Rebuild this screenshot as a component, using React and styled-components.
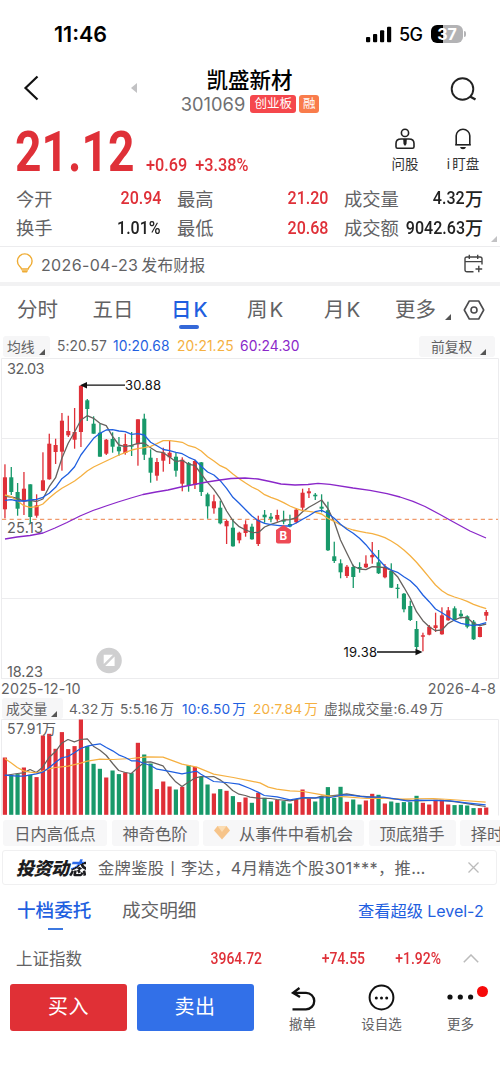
import React from 'react';
import styled, { createGlobalStyle } from 'styled-components';

const RED = '#df3038';
const GREEN = '#18996a';
const BLUE = '#1f5fe0';
const ORANGE = '#f5b041';
const PURPLE = '#8a27c9';
const GRAY = '#626264';

const STEP = 6.333;
const FIRST_X = 4.9;
const xAt = (i) => FIRST_X + i * STEP;

// [up, high, low, bodyTop, bodyBottom, volume]
const candles = [
  [1, 464.3, 518.3, 477.3, 509.3, 57.3],
  [0, 467, 495, 477.3, 492, 40],
  [0, 483, 515.7, 492, 508.7, 40.7],
  [1, 472, 515, 488.7, 501, 47.3],
  [0, 484.3, 523.3, 484.3, 517, 40],
  [1, 494.3, 517.7, 505.3, 515.7, 37.7],
  [1, 452.3, 491, 480.3, 490.7, 79.3],
  [1, 433.7, 479.7, 443.7, 479.3, 81],
  [1, 438.7, 464, 445, 452, 66],
  [1, 413, 470.7, 420.7, 451.7, 82.7],
  [1, 415.7, 437, 431, 435.3, 65.7],
  [1, 408, 448.7, 432, 439.7, 68.7],
  [1, 385.7, 447, 385.7, 432, 95.3],
  [0, 399, 421, 400.3, 409, 68.7],
  [0, 416.3, 433.7, 423.7, 433.7, 51],
  [0, 423.7, 456.7, 432.7, 456.7, 46],
  [1, 439, 455, 439.7, 453.7, 37.3],
  [0, 432.3, 452.7, 439, 446.7, 44.3],
  [0, 437, 455.7, 446.7, 451.3, 40.7],
  [1, 433.7, 454.7, 444, 453, 42.3],
  [0, 432, 456, 445.3, 446.7, 41.7],
  [1, 419.3, 465.7, 419.3, 444.3, 72],
  [0, 413.7, 460, 418.7, 454.7, 60.3],
  [0, 449.3, 482.7, 457.7, 472.7, 51.3],
  [1, 458, 480.7, 462, 475.7, 25.7],
  [1, 447.7, 471.7, 452.3, 460.7, 33.3],
  [1, 440, 464, 452.7, 457.3, 28.3],
  [0, 453, 476.7, 456.7, 470.7, 25.3],
  [1, 457.3, 491.3, 459.7, 483.7, 28],
  [0, 462, 491.7, 463, 485.3, 49.7],
  [1, 459.7, 489, 461, 485, 48],
  [0, 462, 496, 462.3, 492, 38],
  [0, 492.7, 518.7, 494.3, 506.3, 30.3],
  [1, 494.7, 513.7, 501.3, 508.3, 21.3],
  [0, 500.7, 524.3, 507.7, 523.3, 25.7],
  [1, 519.7, 544, 521, 526.3, 24],
  [0, 519, 546.7, 527.7, 546.3, 18.7],
  [1, 531.7, 543.3, 532.7, 540.3, 12.7],
  [1, 520.3, 536.7, 524.3, 533, 17.3],
  [0, 523.7, 539.7, 526.7, 539.3, 12],
  [1, 515.7, 546, 519.7, 544, 22],
  [0, 510, 522.7, 514.7, 517.3, 17],
  [0, 513, 522.3, 516.7, 518.7, 13.3],
  [1, 509.7, 521.7, 515, 519, 15],
  [0, 510.7, 524.3, 519.7, 521.7, 13.7],
  [0, 514.7, 527.3, 524, 526.5, 11.3],
  [1, 508, 523.3, 509.7, 522.3, 15.3],
  [1, 488.7, 511.7, 492.7, 507.7, 25.3],
  [1, 488, 498, 491.3, 493.3, 16.3],
  [0, 493, 500, 494.7, 496.3, 13.3],
  [0, 494.3, 512.3, 506.7, 508.7, 18.7],
  [0, 501.7, 551, 510.3, 550.3, 27.7],
  [0, 541.7, 563, 556.3, 561, 17],
  [0, 559.3, 578.3, 563.3, 572.3, 28],
  [1, 565, 578, 566.7, 576, 13],
  [0, 564.7, 588, 567, 577, 15.3],
  [0, 562.3, 572.7, 567, 568.7, 10.3],
  [1, 555.3, 568, 563.7, 567.3, 14.3],
  [1, 542, 563.7, 555, 557.3, 21],
  [0, 550, 574, 562.3, 573.3, 20],
  [1, 564, 578.3, 566.7, 577.3, 11.3],
  [0, 563.3, 588, 571, 587.7, 13.3],
  [0, 584, 598.3, 587.7, 589, 12],
  [0, 593, 612.3, 593.7, 609.3, 12.7],
  [0, 600.7, 621, 606, 620, 12.7],
  [0, 621, 649.3, 629, 647, 19],
  [1, 632.7, 651.3, 635.3, 636.7, 12],
  [1, 625, 635.3, 626.7, 634.7, 10.3],
  [1, 612.7, 632, 625.3, 628, 15],
  [1, 607.3, 634.7, 615.3, 634.3, 15],
  [1, 607, 620.7, 610.3, 620.3, 10.3],
  [0, 606.3, 620.7, 608.3, 620, 9.7],
  [0, 610, 618.7, 613.7, 616.3, 10],
  [0, 615.3, 628.3, 616.3, 626.7, 9.3],
  [0, 620, 640, 621.7, 639.3, 6.7],
  [1, 626.7, 637.3, 627, 637, 6.7],
  [1, 610, 620.7, 612, 615.7, 7.3],
];

const ma5 = [
  496.3, 497, 498.3, 501.3, 500.3, 501.5, 499, 486.7, 477.7, 458.3, 443.3, 432, 420, 415.7, 418.3, 423.3,
  425.7, 436.3, 445, 446.7, 445.3, 443.3, 443, 447.7, 451.7, 452.7, 457, 461.7, 460.3, 464.3, 465.3, 474,
  482.3, 489.7, 498.7, 511, 520.7, 526.7, 530, 532.3, 532.7, 527, 524.3, 522.3, 520, 519.7, 517.7, 511.7,
  507.3, 503.7, 500, 508.5, 521.7, 540, 553.3, 566, 569, 569.7, 566.7, 567, 567.7, 570.3, 576.7, 587.3,
  598.3, 611.7, 620.7, 626.7, 630.7, 630, 623.3, 620, 617.3, 617.7, 623.3, 625.7, 624,
];
const ma10 = [
  500.3, 499.7, 501, 501, 500, 499.3, 497.3, 493.3, 487.3, 478.7, 473.7, 466.7, 455, 446.7, 438.3, 433.3,
  430, 429.7, 431, 431.7, 434.3, 433.7, 435, 442.3, 445.7, 449.5, 450.7, 452.3, 453.7, 457.3, 460, 466.3,
  472, 475, 480.7, 488.3, 497.3, 503.3, 509.7, 516, 520.7, 523.3, 524.7, 525.3, 526, 526, 523, 519.3,
  515.7, 511.7, 510.3, 513.5, 518.3, 524.3, 529.3, 533.3, 538.3, 544.7, 552.3, 559.3, 566.3, 570, 572.3,
  576.7, 580.7, 586.7, 595, 601.7, 609, 612.7, 616.7, 620.7, 623.3, 624.7, 625.7, 624.3, 622.7,
];
const ma20 = [
  495, 496.7, 501, 505.7, 507.3, 506.7, 504, 498, 492.7, 488.3, 484.7, 481, 476.3, 471, 467, 464, 461, 458,
  455, 452.7, 450, 448.7, 447.7, 446.3, 443.7, 440.7, 440.7, 441.3, 442.3, 445.7, 447.3, 451, 456.7, 461,
  465.7, 468.7, 474, 478.7, 483, 487, 490, 494.7, 497.3, 499.7, 502.7, 506, 508.7, 510.7, 511.3, 512.3, 514,
  518.5, 521.3, 525, 528, 530, 531.3, 532.7, 533.7, 535.3, 537.7, 541, 545, 550, 555.7, 562.3, 569.7, 577.3,
  585, 590.7, 594.7, 597, 599, 601.3, 604.3, 606.7, 608.7,
];
const ma60 =
  '5,539 17,537 30,535.5 43,533 55,528 67,522.5 80,516 93,510.5 106,506 118,502 131,498 143,494.5 156,492 168,490 181,487 194,484.5 207,482 220,480 231,478.5 245,478 258,479 270,481.5 281,484 295,485 308,484.5 318,483.3 330,484.3 353,488 370,490.3 387,493.7 400,497 413,501.3 425,506.5 440,514.5 453,521.7 470,531 486,538';

// volume averages, in thirds of a pixel
const vol5 =
  '14,258 52,252 71,250 90,240 109,249 128,233 147,204 166,187 185,161 204,150 223,157 242,150 262,148 280,170 300,182 319,198 338,222 356,243 376,249 394,252 413,235 433,218 452,217 471,223 489,229 508,255 527,277 546,291 565,278 584,266 603,261 622,262 641,261 660,271 679,285 698,303 717,314 736,318 750,323 774,326 812,327 831,330 870,334 907,326 945,326 965,320 985,320 1020,316 1040,313 1080,320 1150,325 1190,329 1250,334 1320,332 1370,337 1410,344 1457,351';
const vol10 =
  '14,257 52,260 71,260 109,253 128,248 147,235 166,219 185,205 204,201 223,190 242,177 262,170 280,166 300,163 319,174 338,184 356,196 376,204 394,214 413,214 433,222 452,228 471,239 489,242 520,248 546,253 590,245 603,254 641,276 679,279 717,284 750,297 774,308 793,318 831,322 870,331 910,324 950,325 990,324 1030,316 1050,317 1100,323 1150,323 1190,329 1225,335 1250,332 1350,334 1400,340 1457,346';
const vol20 =
  '14,207 33,220 52,234 71,244 90,248 109,250 128,245 147,238 166,234 204,230 242,221 262,215 300,209 340,210 394,207 440,202 489,203 546,224 590,233 641,254 700,264 750,274 780,280 805,293 830,299 870,304 910,306 950,313 990,320 1040,322 1100,327 1150,326 1200,329 1300,327 1350,330 1457,338';

const toPoints = (ys) => ys.map((y, i) => `${xAt(i).toFixed(1)},${y}`).join(' ');

const PriceChart = () => (
  <ChartSvg width="500" height="321" viewBox="0 358 500 321">
    <g stroke="#ececee" fill="none">
      <path d="M1.5 679V358.5H498.5V679M1.5 438.5H498.5M1.5 598.5H498.5M1.5 678.5H498.5" />
    </g>
    <g fill="#5e5e60" fontSize="14.5">
      <text x="7" y="373.5" textLength="37.5">32.03</text>
      <text x="7" y="533.3" textLength="36">25.13</text>
      <text x="7" y="676.5" textLength="36">18.23</text>
    </g>
    <line x1="2" x2="498" y1="519.3" y2="519.3" stroke="#f09a6c" strokeDasharray="4.2 3.4" strokeWidth="1.2" />
    {candles.map(([up, high, low, top, bottom], i) => (
      <g key={i} fill={up ? RED : GREEN}>
        <rect x={xAt(i) - 0.6} y={high} width="1.3" height={low - high} />
        <rect x={xAt(i) - 2} y={top} width="4.1" height={Math.max(bottom - top, 1)} />
      </g>
    ))}
    <g fill="none" strokeWidth="1.3" strokeLinejoin="round">
      <polyline points={toPoints(ma5)} stroke="#66625f" />
      <polyline points={toPoints(ma20)} stroke={ORANGE} />
      <polyline points={toPoints(ma10)} stroke={BLUE} />
      <polyline points={ma60} stroke={PURPLE} />
    </g>
    <path d="M84 385.2H125M377 652H419" stroke="#111" strokeWidth="1.3" />
    <path d="M80 385.2L87 382V388.4ZM422.5 652L415.5 648.8V655.2Z" fill="#111" />
    <g fill="#111" fontSize="13">
      <text x="125" y="390.2" textLength="36">30.88</text>
      <text x="343.5" y="656.8" textLength="33.5">19.38</text>
    </g>
    <path d="M283.5 525L291 530V541.5Q291 543.5 289 543.5H278Q276 543.5 276 541.5V530Z" fill="#ee4a55" />
    <text x="283.3" y="540" fontSize="11.5" fontWeight="700" fill="#fff" textAnchor="middle">B</text>
    <circle cx="109" cy="660.5" r="12.8" fill="#cfcfd0" />
    <path d="M103.7 654.8H113L103.7 664ZM114.6 656.6V666H105.2Z" fill="#fff" />
  </ChartSvg>
);

const VolumeChart = () => (
  <ChartSvg width="500" height="97" viewBox="0 719.5 500 97">
    <path d="M1.5 816V720H498.5V816" stroke="#ececee" fill="none" />
    {candles.map(([up, , , , , volume], i) => (
      <rect key={i} x={xAt(i) - 2.1} y={815.3 - volume} width="4.2" height={volume} fill={up ? RED : GREEN} />
    ))}
    <text x="7" y="734.5" fontSize="14" fill="#5e5e60" textLength="49">57.91万</text>
    <g transform="translate(0 690) scale(0.33333)" fill="none" strokeWidth="3.7" strokeLinejoin="round">
      <polyline points={vol5} stroke="#66625f" />
      <polyline points={vol20} stroke={ORANGE} />
      <polyline points={vol10} stroke={BLUE} />
    </g>
  </ChartSvg>
);

const SignalIcon = () => (
  <svg width="26" height="17" viewBox="0 0 26 17">
    <rect x="0" y="11" width="4.2" height="5.3" rx="1" />
    <rect x="7" y="8" width="4.2" height="8.3" rx="1" />
    <rect x="14" y="4.3" width="4.2" height="12" rx="1" />
    <rect x="21" y="0.7" width="4.2" height="15.6" rx="1" />
  </svg>
);

const AdvisorIcon = () => (
  <svg width="20" height="22" viewBox="0 0 20 22" fill="none" stroke="#222" strokeWidth="1.6">
    <circle cx="10" cy="4.9" r="3.6" />
    <path d="M6 11H14Q19 11 19 15.500V18.700Q19 20.200 17.500 20.200H2.500Q1 20.200 1 18.700V15.500Q1 11 6 11Z" />
    <path d="M8.200 11H11.800L11.500 16L10 18L8.500 16Z" fill="#222" stroke="none" />
  </svg>
);

const BellIcon = () => (
  <svg width="18" height="22" viewBox="0 0 18 22" fill="none" stroke="#222" strokeWidth="1.6">
    <path d="M2.200 16.500V7.800A6.800 6.500 0 0 1 15.800 7.800V16.500" />
    <path d="M1.200 16.800H16.800" />
    <path d="M6 19H12Q11.500 21.300 9 21.300T6 19Z" fill="#222" stroke="none" />
  </svg>
);

const BulbIcon = () => (
  <svg width="18" height="21" viewBox="0 0 18 21" fill="none" stroke="#efac34" strokeWidth="1.4">
    <path d="M5.500 16Q5.200 14.800 3.600 13.300A7.300 7.300 0 1 1 13.900 13.300Q12.500 14.800 12.200 16Z" />
    <path d="M5.500 17.300H12.200L11 19.500H6.500Z" fill="#efac34" stroke="none" />
  </svg>
);

const CalendarIcon = () => (
  <svg width="20" height="20" viewBox="0 0 20 20" fill="none" stroke="#444" strokeWidth="1.4">
    <path d="M9.500 17.800H3Q1 17.800 1 15.800V4.800Q1 3 3 3H16Q18 3 18 4.800V10.500M1 7.600H18M5.300 0.800V5M13.700 0.800V5" />
    <path d="M14.800 11.800V18.200M11.500 15H18.200" />
  </svg>
);

const HexIcon = () => (
  <svg width="22" height="20" viewBox="0 0 22 20" fill="none" stroke="#4c4c4e" strokeWidth="1.6">
    <path d="M6.300 1H15.700L20.700 10L15.700 19H6.300L1.300 10Z" strokeLinejoin="round" />
    <circle cx="11" cy="10" r="3" />
  </svg>
);

const UndoIcon = () => (
  <svg width="26" height="24" viewBox="0 0 26 24" fill="none" stroke="#111" strokeWidth="2.3">
    <path d="M9.500 1L3 5.800L10 10M3 5.800H16A8.250 8.250 0 0 1 16 22.300H2.500" />
  </svg>
);

const ChatIcon = () => (
  <svg width="27" height="27" viewBox="0 0 27 27" fill="#111">
    <circle cx="13.500" cy="13.500" r="11.900" fill="none" stroke="#111" strokeWidth="2" />
    <circle cx="8.300" cy="14" r="1.500" />
    <circle cx="13.500" cy="14" r="1.500" />
    <circle cx="18.700" cy="14" r="1.500" />
  </svg>
);

const MoreIcon = () => (
  <svg width="27" height="27" viewBox="0 0 27 27" fill="#111">
    <circle cx="3" cy="13" r="2.600" />
    <circle cx="13.300" cy="13" r="2.600" />
    <circle cx="23.600" cy="13" r="2.600" />
  </svg>
);

const stats = [
  ['今开', '20.94', '', true],
  ['最高', '21.20', '', true],
  ['成交量', '4.32', '万', false],
  ['换手', '1.01%', '', false],
  ['最低', '20.68', '', true],
  ['成交额', '9042.63', '万', false],
];

const App = () => (
  <Screen>
    <GlobalStyle />
    <StatusBar>
      <Clock>11:46</Clock>
      <SignalIcon />
      <Network>5G</Network>
      <Battery>37</Battery>
      <BatteryTip />
    </StatusBar>

    <Header>
      <svg width="16" height="26" viewBox="0 0 16 26" fill="none" stroke="#111" strokeWidth="2.2">
        <path d="M14.500 1.500L2.500 13L14.500 24.500" />
      </svg>
      <PrevArrow />
      <TitleBlock>
        <StockName>凯盛新材</StockName>
        <CodeRow>
          <Code>301069</Code>
          <Tag $color="#f5474c" $w={46}>创业板</Tag>
          <Tag $color="#f97c4b" $w={20}>融</Tag>
        </CodeRow>
      </TitleBlock>
      <SearchSlot>
        <svg width="28" height="26" viewBox="0 0 28 26" fill="none" stroke="#222" strokeWidth="1.9">
          <circle cx="12.500" cy="12" r="10.800" />
          <path d="M20 19.500L25.500 22.500" strokeWidth="2.400" />
        </svg>
      </SearchSlot>
    </Header>

    <PriceRow>
      <Price>21.12</Price>
      <Change>+0.69&nbsp; +3.38%</Change>
      <Shortcut>
        <AdvisorIcon />
        问股
      </Shortcut>
      <Shortcut>
        <BellIcon />
        <span>i<b>盯盘</b></span>
      </Shortcut>
    </PriceRow>
    <Stats>
      {stats.map(([label, value, unit, red]) => (
        <Stat key={label}>
          <StatLabel>{label}</StatLabel>
          <StatValue $red={red}>
            <Din>{value}</Din>
            {unit}
          </StatValue>
        </Stat>
      ))}
      <Corner />
    </Stats>

    <Notice>
      <BulbIcon />
      <NoticeText>
        <b>2026-04-23</b>发布财报
      </NoticeText>
      <CalendarIcon />
    </Notice>

    <Tabs>
      <Tab $w={75.500}>分时</Tab>
      <Tab $w={78.500}>五日</Tab>
      <Tab $w={76} $active>日<i>K</i></Tab>
      <Tab $w={77}>周<i>K</i></Tab>
      <Tab $w={71}>月<i>K</i></Tab>
      <Tab $w={49.500}>更多</Tab>
      <Triangle />
      <HexSlot>
        <HexIcon />
      </HexSlot>
    </Tabs>

    <MaRow>
      <Pill $w={47}>均线<Triangle /></Pill>
      <MaValue $w={56} $color={GRAY}>5:20.57</MaValue>
      <MaValue $w={64} $color={BLUE}>10:20.68</MaValue>
      <MaValue $w={63} $color={ORANGE}>20:21.25</MaValue>
      <MaValue $w={65} $color={PURPLE}>60:24.30</MaValue>
      <AdjustPill>前复权<Triangle /></AdjustPill>
    </MaRow>

    <PriceChart />
    <Dates>
      <span>2025-12-10</span>
      <span>2026-4-8</span>
    </Dates>

    <VolumeHeader>
      <Pill $w={61}>成交量<Triangle /></Pill>
      <VolValue $w={51} $color={GRAY}>4.32<em>万</em></VolValue>
      <VolValue $w={62} $color={GRAY}>5:5.16<em>万</em></VolValue>
      <VolValue $w={71} $color={BLUE}>10:6.50<em>万</em></VolValue>
      <VolValue $w={71} $color={ORANGE}>20:7.84<em>万</em></VolValue>
      <VolValue $color={GRAY}>虚拟成交量:6.49<em>万</em></VolValue>
    </VolumeHeader>
    <VolumeChart />

    <Chips>
      <Chip $w={104}>日内高低点</Chip>
      <Chip $w={87}>神奇色阶</Chip>
      <Chip $w={161}>
        <svg width="16" height="14" viewBox="0 0 16 14">
          <path d="M3.500 0H12.500L16 4.500L8 13.500L0 4.500Z" fill="#f6c48a" />
          <path d="M3.500 0H12.500L8 6Z" fill="#fbdcb2" />
        </svg>
        从事件中看机会
      </Chip>
      <Chip $w={87}>顶底猎手</Chip>
      <Chip $w={54}>择时</Chip>
    </Chips>

    <Banner>
      <BannerLogo>投资动<u>态</u></BannerLogo>
      <BannerText>金牌鉴股丨李达，4月精选个股301***，推…</BannerText>
      <svg width="11" height="11" viewBox="0 0 11 11" stroke="#bbb" strokeWidth="1.3">
        <path d="M0.500 0.500L10.500 10.500M10.500 0.500L0.500 10.500" />
      </svg>
    </Banner>

    <DepthTabs>
      <DepthTab $active>十档委托</DepthTab>
      <DepthTab>成交明细</DepthTab>
      <LevelLink>查看超级<i>Level-2</i></LevelLink>
    </DepthTabs>

    <IndexRow>
      <IndexName>上证指数</IndexName>
      <IndexValue $w={130}>3964.72</IndexValue>
      <IndexValue $w={103}>+74.55</IndexValue>
      <IndexValue $w={76}>+1.92%</IndexValue>
      <svg width="16" height="9" viewBox="0 0 16 9" fill="none" stroke="#bbb" strokeWidth="1.500">
        <path d="M0.800 8.300L8 1L15.200 8.300" />
      </svg>
    </IndexRow>

    <ActionBar>
      <TradeButton $color="#e03036">买入</TradeButton>
      <TradeButton $color="#3270e8">卖出</TradeButton>
      <Action>
        <UndoIcon />
        撤单
      </Action>
      <Action>
        <ChatIcon />
        设自选
      </Action>
      <Action>
        <MoreIcon />
        更多
        <RedDot />
      </Action>
    </ActionBar>
  </Screen>
);

const GlobalStyle = createGlobalStyle`
  * {
    box-sizing: border-box;
  }
  body {
    margin: 0;
    background: #fff;
  }
`;

const Screen = styled.div`
  width: 500px;
  height: 1083px;
  overflow: hidden;
  background: #fff;
  color: ${GRAY};
  font-family: Inter, 'Noto Sans CJK SC', sans-serif;
  white-space: nowrap;
  svg {
    display: block;
    flex: none;
  }
`;

const StatusBar = styled.div`
  display: flex;
  align-items: center;
  height: 62px;
  padding: 6px 0 0 54px;
  color: #000;
`;

const Clock = styled.div`
  width: 312px;
  font-size: 21.500px;
  font-weight: 600;
`;

const Network = styled.div`
  width: 32px;
  margin-left: 7px;
  font-size: 18px;
  font-weight: 500;
  letter-spacing: -0.6px;
`;

const Battery = styled.div`
  width: 32px;
  height: 18px;
  border-radius: 6px;
  background: linear-gradient(90deg, #000 38%, #b3b3b5 38%);
  color: #fff;
  font-size: 16px;
  font-weight: 700;
  line-height: 18px;
  text-align: center;
`;

const BatteryTip = styled.div`
  width: 2px;
  height: 6px;
  margin-left: 1px;
  border-radius: 0 2px 2px 0;
  background: #b3b3b5;
`;

const Header = styled.div`
  display: flex;
  height: 58px;
  padding-left: 23px;
  > svg {
    margin-top: 13px;
  }
`;

const PrevArrow = styled.div`
  width: 0;
  height: 0;
  margin: 21px 0 0 92px;
  border: 5.5px solid transparent;
  border-right: 6px solid #c2c2c4;
  border-left: 0;
`;

const TitleBlock = styled.div`
  width: 225px;
  text-align: center;
`;

const StockName = styled.div`
  margin-top: 5px;
  color: #000;
  font-size: 21.5px;
  font-weight: 500;
  line-height: 26px;
`;

const CodeRow = styled.div`
  display: flex;
  align-items: center;
  justify-content: center;
  gap: 3px;
  height: 22px;
  padding-left: 1px;
`;

const Code = styled.span`
  margin-right: 2px;
  color: #707072;
  font-size: 18.300px;
`;

const Tag = styled.span`
  width: ${(props) => props.$w}px;
  height: 18px;
  border-radius: 3px;
  background: ${(props) => props.$color};
  color: #fff;
  font-size: 12.5px;
  line-height: 17px;
  text-align: center;
`;

const SearchSlot = styled.div`
  margin: 15px 0 0 88px;
`;

const PriceRow = styled.div`
  display: flex;
  height: 63px;
`;

const Price = styled.div`
  width: 130px;
  padding-left: 15px;
  color: ${RED};
  font-family: Roboto, sans-serif;
  font-size: 55px;
  font-weight: 700;
  line-height: 64px;
  transform: scaleX(0.84);
  transform-origin: 15px 0;
`;

const Change = styled.div`
  width: 246px;
  padding: 34px 0 0 16px;
  color: ${RED};
  font-family: Roboto, sans-serif;
  font-size: 18.800px;
  font-weight: 500;
  line-height: 22px;
  transform: scaleX(0.865);
  transform-origin: 16px 0;
`;

const Shortcut = styled.div`
  display: flex;
  flex-direction: column;
  align-items: center;
  width: 58px;
  padding-top: 8px;
  color: #333;
  font-size: 13.500px;
  line-height: 18px;
  svg {
    margin-bottom: 5px;
  }
  b {
    margin-left: 2px;
    font-weight: 400;
  }
`;

const Stats = styled.div`
  position: relative;
  display: grid;
  grid-template-columns: 145px 151px 139px;
  grid-auto-rows: 29.500px;
  column-gap: 16px;
  height: 64px;
  padding-left: 16px;
  border-bottom: 1px solid #ececee;
`;

const Stat = styled.div`
  display: flex;
  align-items: center;
  justify-content: space-between;
`;

const StatLabel = styled.span`
  font-size: 18.300px;
`;

const StatValue = styled.span`
  display: flex;
  align-items: center;
  justify-content: flex-end;
  width: 0;
  color: ${(props) => (props.$red ? RED : '#222')};
  font-size: 18px;
  font-weight: 500;
`;

const Din = styled.span`
  font-family: Roboto, sans-serif;
  font-size: 19px;
  font-weight: 500;
  transform: scaleX(0.845);
  transform-origin: 100% 0;
`;

const Corner = styled.div`
  position: absolute;
  right: 3px;
  bottom: 4px;
  border: 3.500px solid #c2c2c4;
  border-top-color: transparent;
  border-left-color: transparent;
`;

const Notice = styled.div`
  display: flex;
  align-items: center;
  height: 39px;
  padding: 0 16px 2px;
  border-bottom: 4px solid #f2f2f3;
`;

const NoticeText = styled.div`
  flex: 1;
  margin-left: 7px;
  font-size: 16px;
  b {
    margin-right: 3px;
    font-weight: 400;
    letter-spacing: 0.35px;
  }
`;

const Tabs = styled.div`
  display: flex;
  align-items: center;
  height: 48px;
  padding-left: 17px;
`;

const Tab = styled.div`
  position: relative;
  width: ${(props) => props.$w}px;
  color: ${(props) => (props.$active ? BLUE : GRAY)};
  font-size: 20.500px;
  font-weight: ${(props) => (props.$active ? 500 : 400)};
  line-height: 30px;
  i {
    margin-left: 2px;
    font-style: normal;
  }
  &::after {
    content: '';
    position: absolute;
    top: 30px;
    left: 8px;
    display: ${(props) => (props.$active ? 'block' : 'none')};
    width: 20px;
    height: 4px;
    border-radius: 2px;
    background: #3468d8;
  }
`;

const Triangle = styled.span`
  align-self: flex-end;
  width: 0;
  height: 0;
  margin-bottom: 2px;
  border: 3px solid #555;
  border-top-color: transparent;
  border-left-color: transparent;
  ${Tabs} & {
    margin: 0 0 14px 0;
  }
`;

const HexSlot = styled.div`
  margin: -1px 0 0 12px;
`;

const MaRow = styled.div`
  display: flex;
  align-items: center;
  height: 24px;
  padding-left: 3px;
`;

const Pill = styled.div`
  display: flex;
  align-items: center;
  gap: 4px;
  width: ${(props) => props.$w}px;
  height: 21px;
  padding-left: 4px;
  border-radius: 3px;
  background: #f6f6f7;
  font-size: 13.800px;
`;

const AdjustPill = styled(Pill)`
  gap: 8px;
  width: 76px;
  margin-left: 114px;
  padding-left: 12px;
`;

const MaValue = styled.div`
  width: ${(props) => props.$w}px;
  color: ${(props) => props.$color};
  font-size: 13.800px;
  letter-spacing: 0.1px;
  ${Pill} + & {
    margin-left: 7px;
  }
`;

const ChartSvg = styled.svg`
  font-family: Inter, 'Noto Sans CJK SC', sans-serif;
`;

const Dates = styled.div`
  display: flex;
  justify-content: space-between;
  height: 18px;
  padding: 0 4px 0 1px;
  font-size: 14.300px;
  letter-spacing: 0.2px;
  line-height: 20px;
`;

const VolumeHeader = styled.div`
  display: flex;
  align-items: center;
  height: 22px;
  padding-left: 2px;
`;

const VolValue = styled.div`
  width: ${(props) => props.$w}px;
  color: ${(props) => props.$color};
  font-size: 13.700px;
  letter-spacing: 0.2px;
  em {
    margin-left: 2px;
    font-style: normal;
  }
  ${Pill} + & {
    margin-left: 6px;
  }
`;

const Chips = styled.div`
  display: flex;
  gap: 4.500px;
  margin: 3.500px 0 4px 3px;
`;

const Chip = styled.div`
  display: flex;
  flex: none;
  align-items: center;
  justify-content: center;
  gap: 9px;
  width: ${(props) => props.$w}px;
  height: 26px;
  border-radius: 3px;
  background: #f7f7f8;
  font-size: 16.300px;
`;

const Banner = styled.div`
  display: flex;
  align-items: center;
  width: 495px;
  height: 35px;
  margin-left: 2px;
  padding-left: 13px;
  border: 1px solid #f0f0f1;
  border-radius: 3px;
`;

const BannerLogo = styled.div`
  width: 82px;
  color: #1c1c20;
  font-size: 18px;
  font-style: italic;
  font-weight: 900;
  letter-spacing: -0.5px;
  u {
    background: linear-gradient(150deg, #2c6bea 42%, #1c1c20 42%);
    background-clip: text;
    color: transparent;
    text-decoration: none;
  }
`;

const BannerText = styled.div`
  width: 370px;
  font-size: 16.300px;
  letter-spacing: 0.320px;
`;

const DepthTabs = styled.div`
  display: flex;
  align-items: center;
  height: 50px;
  padding-left: 17px;
`;

const DepthTab = styled.div`
  position: relative;
  width: ${(props) => (props.$active ? 105 : 236)}px;
  color: ${(props) => (props.$active ? BLUE : GRAY)};
  font-size: 18.600px;
  font-weight: ${(props) => (props.$active ? 500 : 400)};
  line-height: 30px;
  &::after {
    content: '';
    position: absolute;
    top: 33px;
    left: 31px;
    display: ${(props) => (props.$active ? 'block' : 'none')};
    width: 15px;
    height: 2px;
    background: #3c78e0;
  }
`;

const LevelLink = styled.div`
  color: ${BLUE};
  font-size: 16.300px;
  i {
    margin-left: 4px;
    font-size: 16px;
    font-style: normal;
  }
`;

const IndexRow = styled.div`
  display: flex;
  align-items: center;
  height: 47px;
  padding-left: 16px;
  svg {
    margin-left: 22px;
  }
`;

const IndexName = styled.div`
  width: 116px;
  font-size: 16.500px;
`;

const IndexValue = styled.div`
  width: ${(props) => props.$w}px;
  color: ${RED};
  font-family: Roboto, sans-serif;
  font-size: 15.700px;
  font-weight: 500;
  text-align: right;
  transform: scaleX(0.89);
  transform-origin: 100% 0;
`;

const ActionBar = styled.div`
  display: flex;
  padding: 2.500px 0 0 10px;
`;

const TradeButton = styled.div`
  width: 117px;
  height: 46.500px;
  margin-right: 9.500px;
  border-radius: 3px;
  background: ${(props) => props.$color};
  color: #fff;
  font-size: 20px;
  letter-spacing: 0.5px;
  line-height: 47px;
  text-align: center;
`;

const Action = styled.div`
  position: relative;
  display: flex;
  flex-direction: column;
  align-items: center;
  justify-content: flex-end;
  width: 79px;
  height: 49px;
  font-size: 13.500px;
  line-height: 18px;
  svg {
    margin-bottom: 4px;
  }
`;

const RedDot = styled.div`
  position: absolute;
  top: 2px;
  left: 56px;
  width: 11px;
  height: 11px;
  border-radius: 50%;
  background: #f60a0a;
`;

export default App;
